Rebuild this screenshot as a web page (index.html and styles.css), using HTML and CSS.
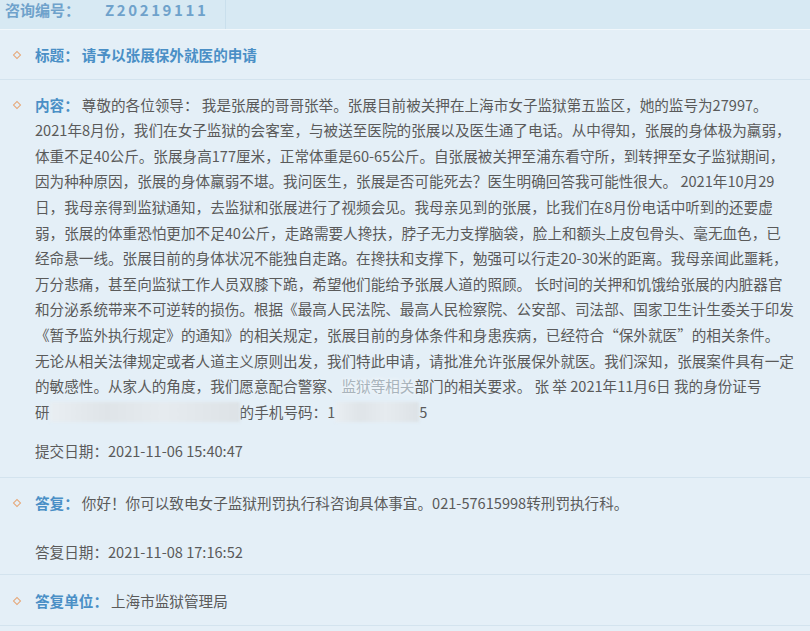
FILE: index.html
```html
<!DOCTYPE html>
<html lang="zh-CN">
<head>
  <meta charset="UTF-8">
  <title>咨询详情</title>
  <link rel="stylesheet" href="styles.css">
</head>
<body>
  <div class="detail">
    <div class="head">
      <div class="head-cell">
        <span class="head-label">咨询编号：</span><span class="head-no">Z20219111</span>
      </div>
    </div>

    <div class="row row-title">
      <p class="item"><span class="label">标题：</span><span class="title-text">请予以张展保外就医的申请</span></p>
    </div>

    <div class="row row-content">
      <p class="item"><span class="label">内容：</span>尊敬的各位领导： 我是张展的哥哥张举。张展目前被关押在上海市女子监狱第五监区，她的监号为27997。
        <span class="line">2021年8月份，我们在女子监狱的会客室，与被送至医院的张展以及医生通了电话。从中得知，张展的身体极为羸弱，</span>
        <span class="line">体重不足40公斤。张展身高177厘米，正常体重是60-65公斤。自张展被关押至浦东看守所，到转押至女子监狱期间，</span>
        <span class="line">因为种种原因，张展的身体羸弱不堪。我问医生，张展是否可能死去？医生明确回答我可能性很大。 2021年10月29</span>
        <span class="line">日，我母亲得到监狱通知，去监狱和张展进行了视频会见。我母亲见到的张展，比我们在8月份电话中听到的还要虚</span>
        <span class="line">弱，张展的体重恐怕更加不足40公斤，走路需要人搀扶，脖子无力支撑脑袋，脸上和额头上皮包骨头、毫无血色，已</span>
        <span class="line">经命悬一线。张展目前的身体状况不能独自走路。在搀扶和支撑下，勉强可以行走20-30米的距离。我母亲闻此噩耗，</span>
        <span class="line">万分悲痛，甚至向监狱工作人员双膝下跪，希望他们能给予张展人道的照顾。 长时间的关押和饥饿给张展的内脏器官</span>
        <span class="line">和分泌系统带来不可逆转的损伤。根据《最高人民法院、最高人民检察院、公安部、司法部、国家卫生计生委关于印发</span>
        <span class="line">《暂予监外执行规定》的通知》的相关规定，张展目前的身体条件和身患疾病，已经符合“保外就医”的相关条件。</span>
        <span class="line">无论从相关法律规定或者人道主义原则出发，我们特此申请，请批准允许张展保外就医。我们深知，张展案件具有一定</span>
        <span class="line">的敏感性。从家人的角度，我们愿意配合警察、<span class="smudge">监狱等相关</span>部门的相关要求。 张 举 2021年11月6日 我的身份证号</span>
        <span class="line">研<span class="blur blur-id"></span>的手机号码：1<span class="blur blur-phone"></span>5</span></p>
      <p class="date">提交日期：2021-11-06 15:40:47</p>
    </div>

    <div class="row row-reply">
      <p class="item"><span class="label">答复：</span>你好！你可以致电女子监狱刑罚执行科咨询具体事宜。021-57615998转刑罚执行科。</p>
      <p class="date date-reply">答复日期：2021-11-08 17:16:52</p>
    </div>

    <div class="row row-unit">
      <p class="item"><span class="label">答复单位：</span>上海市监狱管理局</p>
    </div>
  </div>
</body>
</html>
```

FILE: styles.css
```css
body {
  margin: 0;
  background: #e4eff7;
  font-family: "Microsoft YaHei", "Noto Sans CJK SC", "Noto Sans", sans-serif;
  color: #5a5a5a;
  font-size: 14.6px;
}

.detail {
  width: 810px;
  height: 631px;
  overflow: hidden;
  background: #e4eff7;
}

.head {
  display: flex;
  height: 29px;
  background: #d7e9f3;
  border-bottom: 1px solid #f1f7fb;
  font-size: 15px;
}

.head-cell {
  width: 220px;
  padding-left: 5px;
  border-right: 1px solid #c9dfec;
  line-height: 20px;
  font-weight: bold;
  color: #6fa2cb;
}

.head-label {
  display: inline-block;
  width: 100px;
}

.head-no {
  letter-spacing: 2.6px;
}

.row {
  border-bottom: 1px solid #d3e3ee;
  padding: 0 0 0 35px;
}

.item {
  margin: 0;
  line-height: 25.6px;
  white-space: nowrap;
}

.item::before {
  content: "";
  display: inline-block;
  width: 4px;
  height: 4px;
  border: 1.3px solid #e6a676;
  transform: rotate(45deg);
  margin-left: -21px;
  margin-right: 15px;
  vertical-align: 3px;
}

.line {
  display: block;
}

.label {
  font-weight: bold;
  color: #4a8fc6;
  margin-right: 3px;
}

.title-text {
  font-weight: bold;
  color: #4a8fc6;
}

.row-title {
  padding-top: 12px;
  padding-bottom: 11px;
}

.row-content {
  padding-top: 12px;
  padding-bottom: 13px;
}

.row-reply {
  padding-top: 12px;
  padding-bottom: 10px;
}

.row-unit {
  padding-top: 13px;
  padding-bottom: 11px;
}

.date {
  margin: 14px 0 0;
  line-height: 25.6px;
}

.date-reply {
  margin-top: 23px;
}

.blur {
  display: inline-block;
  height: 20px;
  vertical-align: -4px;
  background: linear-gradient(90deg, #e9eef2, #dfe4e8 30%, #e6ebef 60%, #dde2e6);
  filter: blur(1.5px);
}

.blur-id {
  width: 190px;
}

.blur-phone {
  width: 84px;
}

.smudge {
  color: #a9b4bc;
  text-shadow: 0 0 4px #ffffff;
}
```
